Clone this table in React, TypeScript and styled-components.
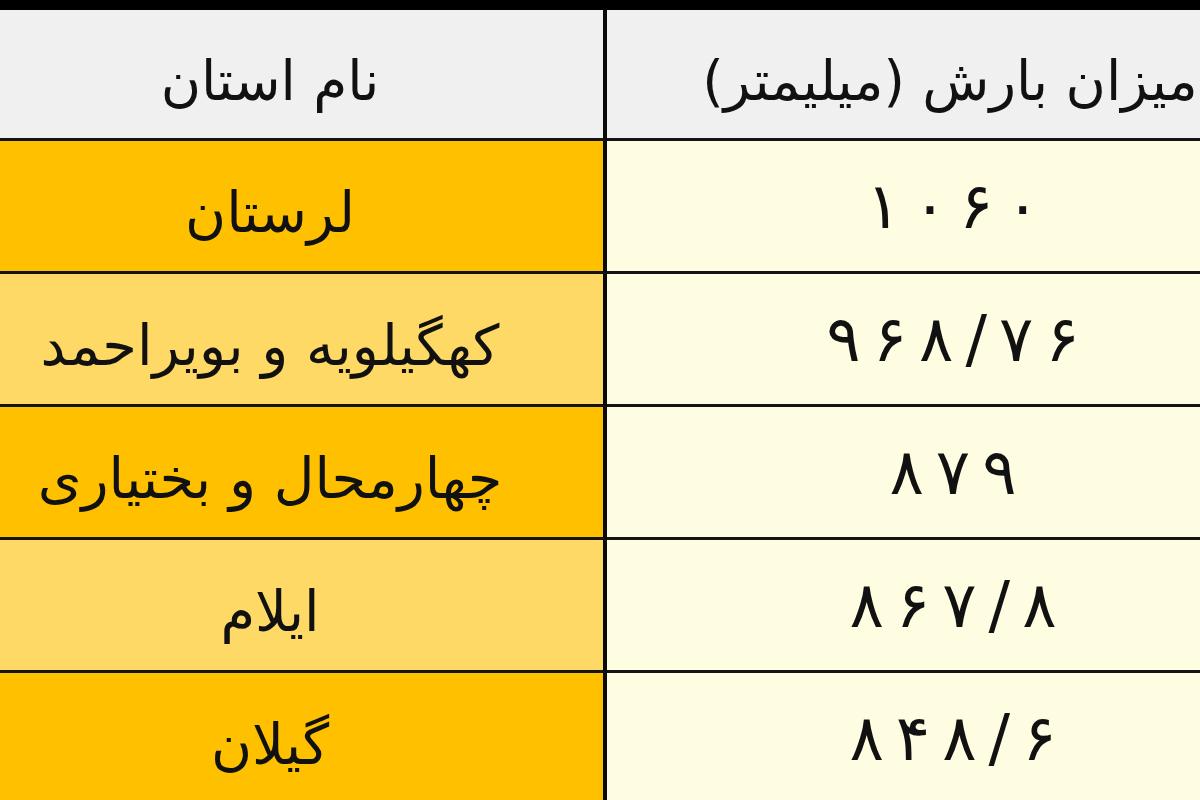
import * as React from 'react';
import styled, { createGlobalStyle } from 'styled-components';

const GlobalStyle = createGlobalStyle`
  html, body {
    margin: 0;
    padding: 0;
    background: #ffffff;
    overflow: hidden;
  }
  body {
    font-family: "DejaVu Sans", "Noto Sans", sans-serif;
  }
`;

const Page = styled.div`
  width: 1200px;
  height: 800px;
  overflow: hidden;
`;

// the table is wider than the shot: both columns run past the frame
const Table = styled.div`
  display: grid;
  grid-template-columns: 670px 686px;
  grid-template-rows: 131px;
  grid-auto-rows: 133px;
  margin-left: -63px;
  width: 1356px;
  border-top: 10px solid #000;
`;

const Cell = styled.div<{ $bg: string; $side: 'name' | 'value' }>`
  display: flex;
  align-items: center;
  justify-content: center;
  background: ${(p) => p.$bg};
  border-bottom: 3px solid #141414;
  border-right: ${(p) => (p.$side === 'name' ? '4px solid #0a0a0a' : 'none')};
  color: #111;
  direction: rtl;
  white-space: nowrap;
`;

const HeaderCell = styled(Cell)`
  font-size: 55px;
  padding-top: 14px;
`;

const NameText = styled.span`
  font-size: 56px;
  line-height: 1;
  padding-top: 14px;
`;

// letter-spacing is dropped for Arabic-script digits, so space them by hand
const NumberText = styled.span`
  display: flex;
  direction: ltr;
  gap: 12px;
  font-size: 64px;
  line-height: 1;
  padding-left: 6px;
`;

type Row = { name: string; value: string; light: boolean };

const rows: Row[] = [
  { name: 'لرستان', value: '۱۰۶۰', light: false },
  { name: 'کهگیلویه و بویراحمد', value: '۹۶۸/۷۶', light: true },
  { name: 'چهارمحال و بختیاری', value: '۸۷۹', light: false },
  { name: 'ایلام', value: '۸۶۷/۸', light: true },
  { name: 'گیلان', value: '۸۴۸/۶', light: false },
];

export default function App(): JSX.Element {
  return (
    <Page>
      <GlobalStyle />
      <Table>
        <HeaderCell $bg="#f0f0f0" $side="name">
          نام استان
        </HeaderCell>
        <HeaderCell $bg="#f0f0f0" $side="value">
          میزان بارش (میلیمتر)
        </HeaderCell>
        {rows.map((row) => (
          <React.Fragment key={row.name}>
            <Cell $bg={row.light ? '#ffd966' : '#ffc000'} $side="name">
              <NameText>{row.name}</NameText>
            </Cell>
            <Cell $bg="#fffde1" $side="value">
              <NumberText>
                {row.value.split('').map((ch, i) => (
                  <span key={i}>{ch}</span>
                ))}
              </NumberText>
            </Cell>
          </React.Fragment>
        ))}
      </Table>
    </Page>
  );
}
